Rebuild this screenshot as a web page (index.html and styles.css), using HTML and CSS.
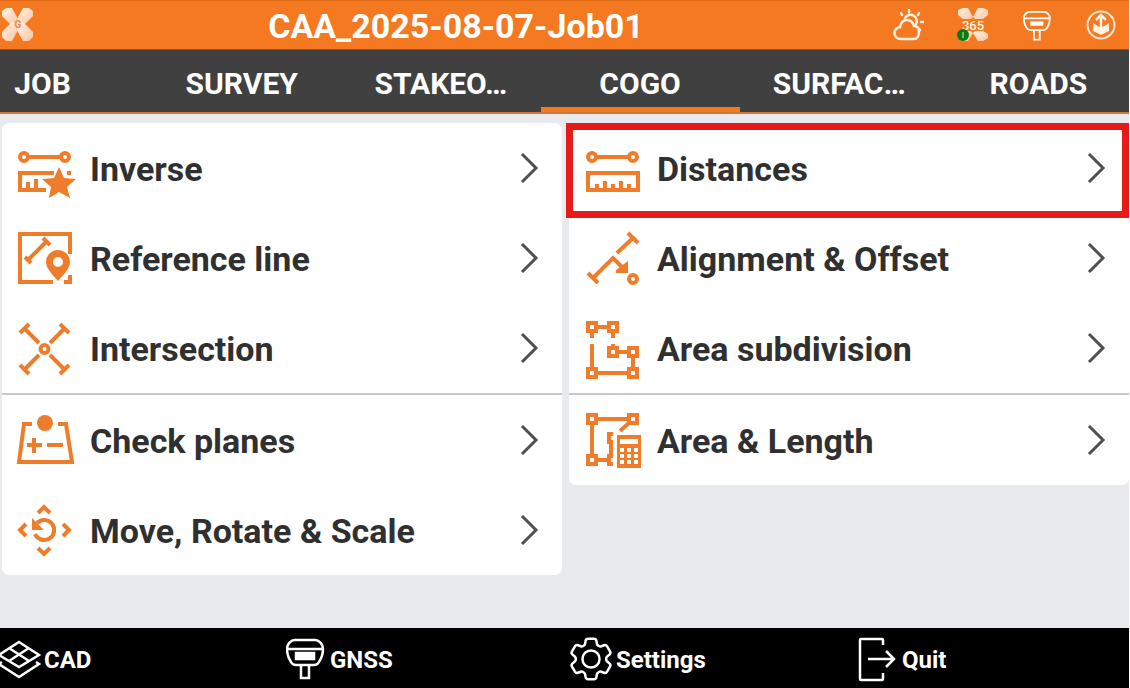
FILE: index.html
```
<!DOCTYPE html>
<html lang="en">
<head>
  <meta charset="UTF-8">
  <meta name="viewport" content="width=device-width, initial-scale=1.0">
  <title>CAA_2025-08-07-Job01</title>
  <link rel="stylesheet" href="styles.css">
</head>
<body>
  <!-- Shared shapes -->
  <svg class="defs" aria-hidden="true">
    <defs>
      <linearGradient id="petal" x1="0" y1="0" x2="1" y2="1">
        <stop offset="0" stop-color="#fff3ea"/>
        <stop offset="1" stop-color="#fbc49e"/>
      </linearGradient>
      <symbol id="chevron" viewBox="0 0 20 34">
        <path d="M2 3l14 14L2 31" fill="none" stroke="#505050" stroke-width="3"/>
      </symbol>
      <symbol id="antenna" viewBox="0 0 44 44">
        <g fill="none" stroke="#fff" stroke-width="2.5">
          <path d="M9 4h20c4 0 8 4 8 9 0 6-2 10-4 13-1 2-3 3-5 3H10c-2 0-4-1-5-3-2-3-4-7-4-13 0-5 4-9 8-9z"/>
          <path d="M1 13h36M15 29v13h8V29"/>
        </g>
        <path d="M10 17h18v6H10z" fill="#fff"/>
      </symbol>
    </defs>
  </svg>

  <header class="topbar">
    <svg class="logo" viewBox="0 0 36 36" aria-hidden="true">
      <g fill="url(#petal)">
        <path d="M2 4l4-3h6l6 11v5l-6 2L2 9z"/>
        <path d="M33 4l-4-3h-6l-6 11v5l6 2L33 9z"/>
        <path d="M2 30l4 4h6l6-11v-6l-6-2L2 25z"/>
        <path d="M33 30l-4 4h-6l-6-11v-6l6-2 10 10z"/>
      </g>
      <text x="18" y="21" text-anchor="middle" class="logo-letter">G</text>
    </svg>
    <h1 class="title">CAA_2025-08-07-Job01</h1>
    <div class="status">
      <svg class="status-icon" viewBox="0 0 36 36" aria-hidden="true">
        <g fill="none" stroke="#fff3e4" stroke-width="2.5" stroke-linecap="round">
          <path d="M10 32a6 6 0 0 1-1-12c1-5 4-7 7-7 4 0 6 3 7 6 4 0 5 3 5 6 0 4-2 7-5 7z"/>
          <path d="M14 11a6 6 0 1 1 11 6M18 3v2M10 6l1 2M28 6l-1 2M30 15h2M28 22l1 1"/>
        </g>
      </svg>
      <svg class="status-icon" viewBox="0 0 36 36" aria-hidden="true">
        <g fill="url(#petal)">
          <path d="M3 3l5-2h5l5 9-2 2H8L3 8z"/>
          <path d="M33 3l-5-2h-5l-5 9 2 2h8l5-4z"/>
          <path d="M3 31l5 3h5l5-8-2-2H8l-5 3z"/>
          <path d="M33 31l-5 3h-5l-5-8 2-2h8l5 3z"/>
        </g>
        <text x="18" y="23" text-anchor="middle" class="badge-number">365</text>
        <circle cx="8" cy="28" r="6" fill="#087a12"/>
        <path d="M8 25v6" stroke="#8fd08f" stroke-width="1.5"/>
      </svg>
      <svg class="status-icon antenna" aria-hidden="true"><use href="#antenna"/></svg>
      <svg class="status-icon" viewBox="0 0 36 36" aria-hidden="true">
        <circle cx="18" cy="18" r="13.5" fill="none" stroke="#ffe6cf" stroke-width="2"/>
        <path d="M10 16l8 5 8-5v8l-8 4-8-4z" fill="#fff3e4"/>
        <path d="M18 22V9M13 13l5-5 5 5" fill="none" stroke="#fff3e4" stroke-width="2.5"/>
      </svg>
    </div>
  </header>

  <nav class="tabs">
    <div class="tab-strip">
      <a class="tab" href="#job">JOB</a>
      <a class="tab" href="#survey">SURVEY</a>
      <a class="tab" href="#stakeout">STAKEO…</a>
      <a class="tab active" href="#cogo">COGO</a>
      <a class="tab" href="#surfaces">SURFAC…</a>
      <a class="tab" href="#roads">ROADS</a>
    </div>
  </nav>

  <main class="content">
    <section class="panel">
      <button class="item">
        <svg class="icon" viewBox="0 0 58 58" aria-hidden="true">
          <circle cx="8" cy="18" r="4"/><circle cx="49" cy="18" r="4"/>
          <path d="M12 18h33M38 34H4v17h26M12 50v-7M20 50V40M51 34h4"/>
          <path class="solid" d="M43 28l5 11 12 1-9 8 3 11-11-6-10 6 2-11-9-8 12-1z"/>
        </svg>
        <span class="label">Inverse</span>
        <svg class="chevron" aria-hidden="true"><use href="#chevron"/></svg>
      </button>
      <button class="item">
        <svg class="icon" viewBox="0 0 58 58" aria-hidden="true">
          <path d="M54 25V5H4v48h33M48 53h6v-7"/>
          <path d="M12 31l18-18M9 28l6 6M27 9l7 7"/>
          <path class="solid" fill-rule="evenodd" d="M42 52c-4-5-12-12-12-19a12 12 0 0 1 24 0c0 7-8 14-12 19zM42 28a5 5 0 1 0 0 10 5 5 0 0 0 0-10z"/>
        </svg>
        <span class="label">Reference line</span>
        <svg class="chevron" aria-hidden="true"><use href="#chevron"/></svg>
      </button>
      <button class="item">
        <svg class="icon" viewBox="0 0 58 58" aria-hidden="true">
          <circle cx="28.5" cy="30" r="4"/>
          <path d="M9 10l14 14M48 10L34 24M9 50l14-14M48 50L34 36"/>
          <path d="M4 14l9-9M44 5l9 9M4 46l9 9M44 55l9-9"/>
        </svg>
        <span class="label">Intersection</span>
        <svg class="chevron" aria-hidden="true"><use href="#chevron"/></svg>
      </button>
      <button class="item divided">
        <svg class="icon" viewBox="0 0 58 58" aria-hidden="true">
          <path d="M16 13H8L3 51h53l-6-38h-8M11 34h15M18 27v15M31 34h16"/>
          <circle class="solid" cx="29" cy="12" r="8"/>
        </svg>
        <span class="label">Check planes</span>
        <svg class="chevron" aria-hidden="true"><use href="#chevron"/></svg>
      </button>
      <button class="item">
        <svg class="icon" viewBox="0 0 58 58" aria-hidden="true">
          <path d="M22 12l6-6 6 6M22 47l6 6 6-6M10 23l-6 6 6 6M47 23l6 6-6 6"/>
          <path d="M19 33a10 10 0 1 0 2-11"/>
          <path class="solid" d="M16 17l4 4 7 7v1H16z"/>
        </svg>
        <span class="label">Move, Rotate &amp; Scale</span>
        <svg class="chevron" aria-hidden="true"><use href="#chevron"/></svg>
      </button>
    </section>

    <section class="panel">
      <button class="item highlighted">
        <svg class="icon" viewBox="0 0 58 58" aria-hidden="true">
          <circle cx="9" cy="18" r="4"/><circle cx="50" cy="18" r="4"/>
          <path d="M13 18h33M5 34h50v17H5zM14 50v-5M22 50v-8M30 50v-5M38 50v-8M46 50v-5"/>
        </svg>
        <span class="label">Distances</span>
        <svg class="chevron" aria-hidden="true"><use href="#chevron"/></svg>
      </button>
      <button class="item">
        <svg class="icon" viewBox="0 0 58 58" aria-hidden="true">
          <path d="M10 49l20-20 9 9M34 24L51 8M5 44l10 10M45 4l10 10"/>
          <path class="solid" d="M45 32v12H33v-3z"/>
          <circle cx="50" cy="50" r="4"/>
        </svg>
        <span class="label">Alignment &amp; Offset</span>
        <svg class="chevron" aria-hidden="true"><use href="#chevron"/></svg>
      </button>
      <button class="item">
        <svg class="icon" viewBox="0 0 58 58" aria-hidden="true">
          <path d="M5 4h8v8H5zM26 4h8v8h-8zM26 29h8v8h-8zM46 29h8v8h-8zM5 50h8v8H5zM46 50h8v8h-8z"/>
          <path d="M13 8h13M9 12v7M30 12v7M9 25v25M30 29v-4M34 33h12M50 37v13M13 54h33"/>
        </svg>
        <span class="label">Area subdivision</span>
        <svg class="chevron" aria-hidden="true"><use href="#chevron"/></svg>
      </button>
      <button class="item divided">
        <svg class="icon" viewBox="0 0 58 58" aria-hidden="true">
          <path d="M5 4h8v8H5zM46 4h8v8h-8zM5 45h8v8H5z"/>
          <path d="M13 8h33M9 12v33M13 49h11M46 12l-9 8M30 23h-4v8h4M28 31v14M30 45h-4v8h4"/>
          <path class="solid" fill-rule="evenodd" d="M34 24h24v33H34zM37 28v5h18v-5zM37 37v4h4v-4zM44 37v4h4v-4zM51 37v4h4v-4zM37 43v4h4v-4zM44 43v4h4v-4zM51 43v4h4v-4zM37 49v4h4v-4zM44 49v4h4v-4zM51 49v4h4v-4z"/>
        </svg>
        <span class="label">Area &amp; Length</span>
        <svg class="chevron" aria-hidden="true"><use href="#chevron"/></svg>
      </button>
    </section>
  </main>

  <footer class="bottombar">
    <div class="actions">
      <button class="action">
        <svg class="action-icon" viewBox="0 0 44 44" aria-hidden="true">
          <path d="M19 6l20 13-20 12L-1 19zM9 12l20 13M29 12L9 25M2 26l-3 2 20 13 20-13-3-2"/>
        </svg>
        <span class="action-label">CAD</span>
      </button>
      <button class="action">
        <svg class="action-icon" viewBox="0 0 44 44" aria-hidden="true"><use href="#antenna"/></svg>
        <span class="action-label">GNSS</span>
      </button>
      <button class="action">
        <svg class="action-icon" viewBox="0 0 44 44" aria-hidden="true">
          <g transform="translate(-8 -4) scale(2.25)" stroke-width="1.1">
            <path d="M9.594 3.94c.09-.542.56-.94 1.11-.94h2.593c.55 0 1.02.398 1.11.94l.213 1.281c.063.374.313.686.645.87.074.04.147.083.22.127.325.196.72.257 1.075.124l1.217-.456a1.125 1.125 0 0 1 1.37.49l1.296 2.247a1.125 1.125 0 0 1-.26 1.431l-1.003.827c-.293.241-.438.613-.43.992a7.723 7.723 0 0 1 0 .255c-.008.378.137.75.43.991l1.004.827c.424.35.534.955.26 1.43l-1.298 2.247a1.125 1.125 0 0 1-1.369.491l-1.217-.456c-.355-.133-.75-.072-1.076.124a6.47 6.47 0 0 1-.22.128c-.331.183-.581.495-.644.869l-.213 1.281c-.09.543-.56.94-1.11.94h-2.594c-.55 0-1.019-.398-1.11-.94l-.213-1.281c-.062-.374-.312-.686-.644-.87a6.52 6.52 0 0 1-.22-.127c-.325-.196-.72-.257-1.076-.124l-1.217.456a1.125 1.125 0 0 1-1.369-.49l-1.297-2.247a1.125 1.125 0 0 1 .26-1.431l1.004-.827c.292-.24.437-.613.43-.991a6.932 6.932 0 0 1 0-.255c.007-.38-.138-.751-.43-.992l-1.004-.827a1.125 1.125 0 0 1-.26-1.43l1.297-2.247a1.125 1.125 0 0 1 1.37-.491l1.216.456c.356.133.751.072 1.076-.124.072-.044.146-.086.22-.128.332-.183.582-.495.644-.869z"/>
            <circle cx="12" cy="12" r="3.8"/>
          </g>
        </svg>
        <span class="action-label">Settings</span>
      </button>
      <button class="action">
        <svg class="action-icon" viewBox="0 0 44 44" aria-hidden="true">
          <path d="M25 9V4q0-1-1-1H3Q2 3 2 4v38q0 2 1 2h21q1 0 1-2v-5M10 23h26M28 15l8 8-8 8"/>
        </svg>
        <span class="action-label">Quit</span>
      </button>
    </div>
  </footer>
</body>
</html>
```
FILE: styles.css
```
:root {
  --orange: #f47920;
  --icon: #ee7c2b;
  --dark: #404040;
  --text: #303030;
  --background: #e8eaee;
  --red: #e71a1a;
}

* {
  margin: 0;
  padding: 0;
  box-sizing: border-box;
}

body {
  font-family: Roboto, "Liberation Sans", sans-serif;
  font-weight: 700;
  background-color: var(--background);
  color: var(--text);
  display: flex;
  flex-direction: column;
  min-height: 100vh;
  border-right: 1px solid #fff;
  overflow-x: hidden;
}

button {
  font: inherit;
  color: inherit;
  background: none;
  border: none;
  cursor: pointer;
}

svg {
  flex: none;
  overflow: visible;
}

.defs {
  position: absolute;
  width: 0;
  height: 0;
}

/* Top bar */
.topbar {
  display: flex;
  align-items: center;
  height: 50px;
  background-color: var(--orange);
  border-top: 1px solid #e06a14;
  border-bottom: 1px solid #a34a0c;
  color: #fff;
}

.logo,
.status-icon {
  width: 36px;
  height: 36px;
}

.logo-letter {
  font-size: 10px;
  fill: #f08a45;
}

.badge-number {
  font-size: 13px;
  font-weight: 500;
  fill: #fff3e4;
}

.title {
  flex: 1;
  padding-top: 2px;
  font-size: 34px;
  line-height: 40px;
  text-align: center;
}

.status {
  display: flex;
  gap: 28px;
  padding: 0 10px 0 15px;
}

.status-icon.antenna {
  width: 32px;
  height: 32px;
  margin: 2px 0 2px 4px;
}

/* Tabs */
.tabs {
  background-color: var(--dark);
  border-bottom: 2px solid #c8793a;
  overflow: hidden;
}

.tab-strip {
  display: grid;
  grid-template-columns: repeat(6, 1fr);
  margin: 0 -9px 0 -57px;
}

.tab {
  height: 62px;
  padding-top: 3px;
  font-size: 30px;
  line-height: 62px;
  text-align: center;
  color: #fff;
  text-decoration: none;
}

.tab.active {
  box-shadow: inset 0 -5px var(--orange);
}

/* Menu */
.content {
  flex: 1;
  display: grid;
  grid-template-columns: 1fr 1fr;
  align-items: start;
  gap: 7px;
  padding: 9px 0 9px 2px;
}

.panel {
  background-color: #fff;
  border-radius: 7px;
}

.item {
  position: relative;
  display: flex;
  align-items: center;
  gap: 16px;
  width: 100%;
  height: 90px;
  padding: 0 22px 0 14px;
  font-size: 34px;
  line-height: 40px;
  text-align: left;
}

.item.divided {
  height: 92px;
  border-top: 2px solid #c8c8c8;
}

.item.highlighted::after {
  content: "";
  position: absolute;
  inset: 0 0 -5px -3px;
  border: 7px solid var(--red);
}

.icon {
  width: 58px;
  height: 58px;
  fill: none;
  stroke: var(--icon);
  stroke-width: 4;
}

.icon .solid {
  fill: var(--icon);
  stroke: none;
}

.label {
  flex: 1;
  padding-top: 2px;
}

.chevron {
  width: 20px;
  height: 34px;
}

/* Bottom bar */
.bottombar {
  background-color: #000;
  color: #fff;
  overflow: hidden;
}

.actions {
  display: grid;
  grid-template-columns: repeat(4, 1fr);
  margin-right: -15px;
}

.action {
  display: flex;
  align-items: center;
  height: 60px;
  font-size: 24px;
  line-height: 30px;
}

.action-icon {
  width: 44px;
  height: 44px;
  fill: none;
  stroke: #fff;
  stroke-width: 2.5;
}

.action-label {
  padding-top: 4px;
}
```
